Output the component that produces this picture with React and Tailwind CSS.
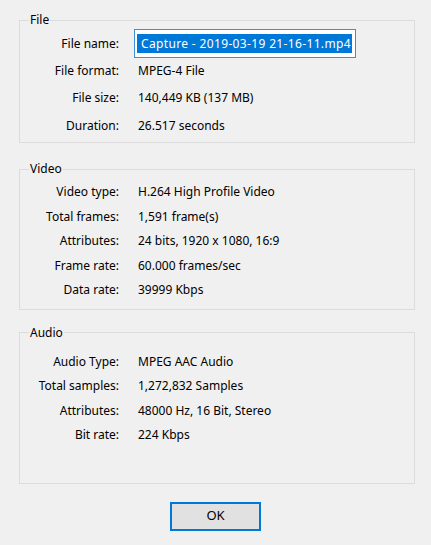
import React from 'react';

const groups = [
  {
    title: 'File',
    rowH: 'h-[27.3px]',
    box: 'pt-[2px] pb-[3px]',
    rows: [
      ['File name:', null],
      ['File format:', 'MPEG-4 File'],
      ['File size:', '140,449 KB (137 MB)'],
      ['Duration:', '26.517 seconds'],
    ],
  },
  {
    title: 'Video',
    rowH: 'h-[24.5px]',
    box: 'mt-[18px] pt-[3px] pb-[6px]',
    rows: [
      ['Video type:', 'H.264 High Profile Video'],
      ['Total frames:', '1,591 frame(s)'],
      ['Attributes:', '24 bits, 1920 x 1080, 16:9'],
      ['Frame rate:', '60.000 frames/sec'],
      ['Data rate:', '39999 Kbps'],
    ],
  },
  {
    title: 'Audio',
    rowH: 'h-[24.5px]',
    box: 'mt-[15px] pt-[9px] pb-[35px]',
    rows: [
      ['Audio Type:', 'MPEG AAC Audio'],
      ['Total samples:', '1,272,832 Samples'],
      ['Attributes:', '48000 Hz, 16 Bit, Stereo'],
      ['Bit rate:', '224 Kbps'],
    ],
  },
];

function Group({ g }) {
  return (
    <fieldset className={`border border-[#dcdcdc] ${g.box}`}>
      <legend className="ml-[9px] px-[1px] leading-[16px]">{g.title}</legend>
      {g.rows.map(([label, value]) => (
        <div key={label} className={`flex items-center ${g.rowH}`}>
          <div className="w-[100px] text-right pr-[1px]">{label}</div>
          {value === null ? (
            <div className="ml-[14px] h-[29px] w-[222px] border border-[#3b8fdf] bg-white flex items-center pl-[2px]">
              <span className="bg-[#0078d7] text-white leading-[19px] pl-[4px] pr-[1px] tracking-[0.35px]">Capture - 2019-03-19 21-16-11.mp4</span>
            </div>
          ) : (
            <div className="ml-[18px]">{value}</div>
          )}
        </div>
      ))}
    </fieldset>
  );
}

export default function App() {
  return (
    <div className="w-[431px] h-[545px] bg-[#f0f0f0] text-black text-[12px] pl-[19px] pt-[12px]" style={{ fontFamily: '"Noto Sans", "Open Sans", sans-serif' }}>
      <div className="w-[396px] flex flex-col">
        {groups.map((g) => (
          <Group key={g.title} g={g} />
        ))}
        <div className="flex justify-center pr-[3px] mt-[18px]">
          <button className="w-[91px] h-[29px] bg-[#e1e1e1] border-2 border-[#0078d7] flex items-center justify-center text-[13px]">
            OK
          </button>
        </div>
      </div>
    </div>
  );
}
